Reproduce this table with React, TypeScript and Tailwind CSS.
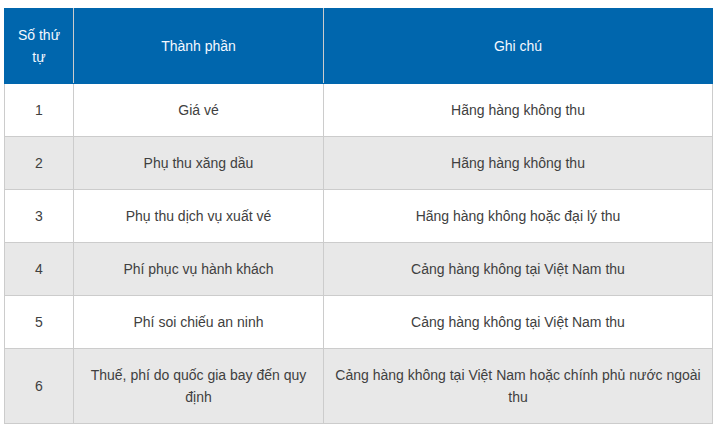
import React from "react";

const rows: [string, string, string][] = [
  ["1", "Giá vé", "Hãng hàng không thu"],
  ["2", "Phụ thu xăng dầu", "Hãng hàng không thu"],
  ["3", "Phụ thu dịch vụ xuất vé", "Hãng hàng không hoặc đại lý thu"],
  ["4", "Phí phục vụ hành khách", "Cảng hàng không tại Việt Nam thu"],
  ["5", "Phí soi chiếu an ninh", "Cảng hàng không tại Việt Nam thu"],
  ["6", "Thuế, phí do quốc gia bay đến quy định", "Cảng hàng không tại Việt Nam hoặc chính phủ nước ngoài thu"],
];

export default function App() {
  return (
    <div className="w-[720px] h-[432px] bg-white pt-[8px] pl-[4px] overflow-hidden" style={{ fontFamily: '"Liberation Sans", Arial, sans-serif' }}>
      <table className="table-fixed border-collapse w-[708px] text-[14px] leading-[22px] text-[#404040]">
        <colgroup>
          <col className="w-[69px]" />
          <col className="w-[250px]" />
          <col className="w-[389px]" />
        </colgroup>
        <thead>
          <tr className="bg-[#0066ad] text-[#f4f8ff]">
            <th className="font-normal border border-[#0066ad] border-r-[#cccccc] px-[10px] py-[15px] text-center align-middle">Số thứ tự</th>
            <th className="font-normal border border-[#0066ad] border-r-[#cccccc] px-[10px] py-[15px] text-center align-middle">Thành phần</th>
            <th className="font-normal border border-[#0066ad] px-[10px] py-[15px] text-center align-middle">Ghi chú</th>
          </tr>
        </thead>
        <tbody>
          {rows.map((r, i) => (
            <tr key={i} className={i % 2 === 1 ? "bg-[#e8e8e8]" : "bg-white"}>
              {r.map((c, j) => (
                <td key={j} className="border border-[#cccccc] px-[10px] py-[15px] text-center align-middle">{c}</td>
              ))}
            </tr>
          ))}
        </tbody>
      </table>
    </div>
  );
}
